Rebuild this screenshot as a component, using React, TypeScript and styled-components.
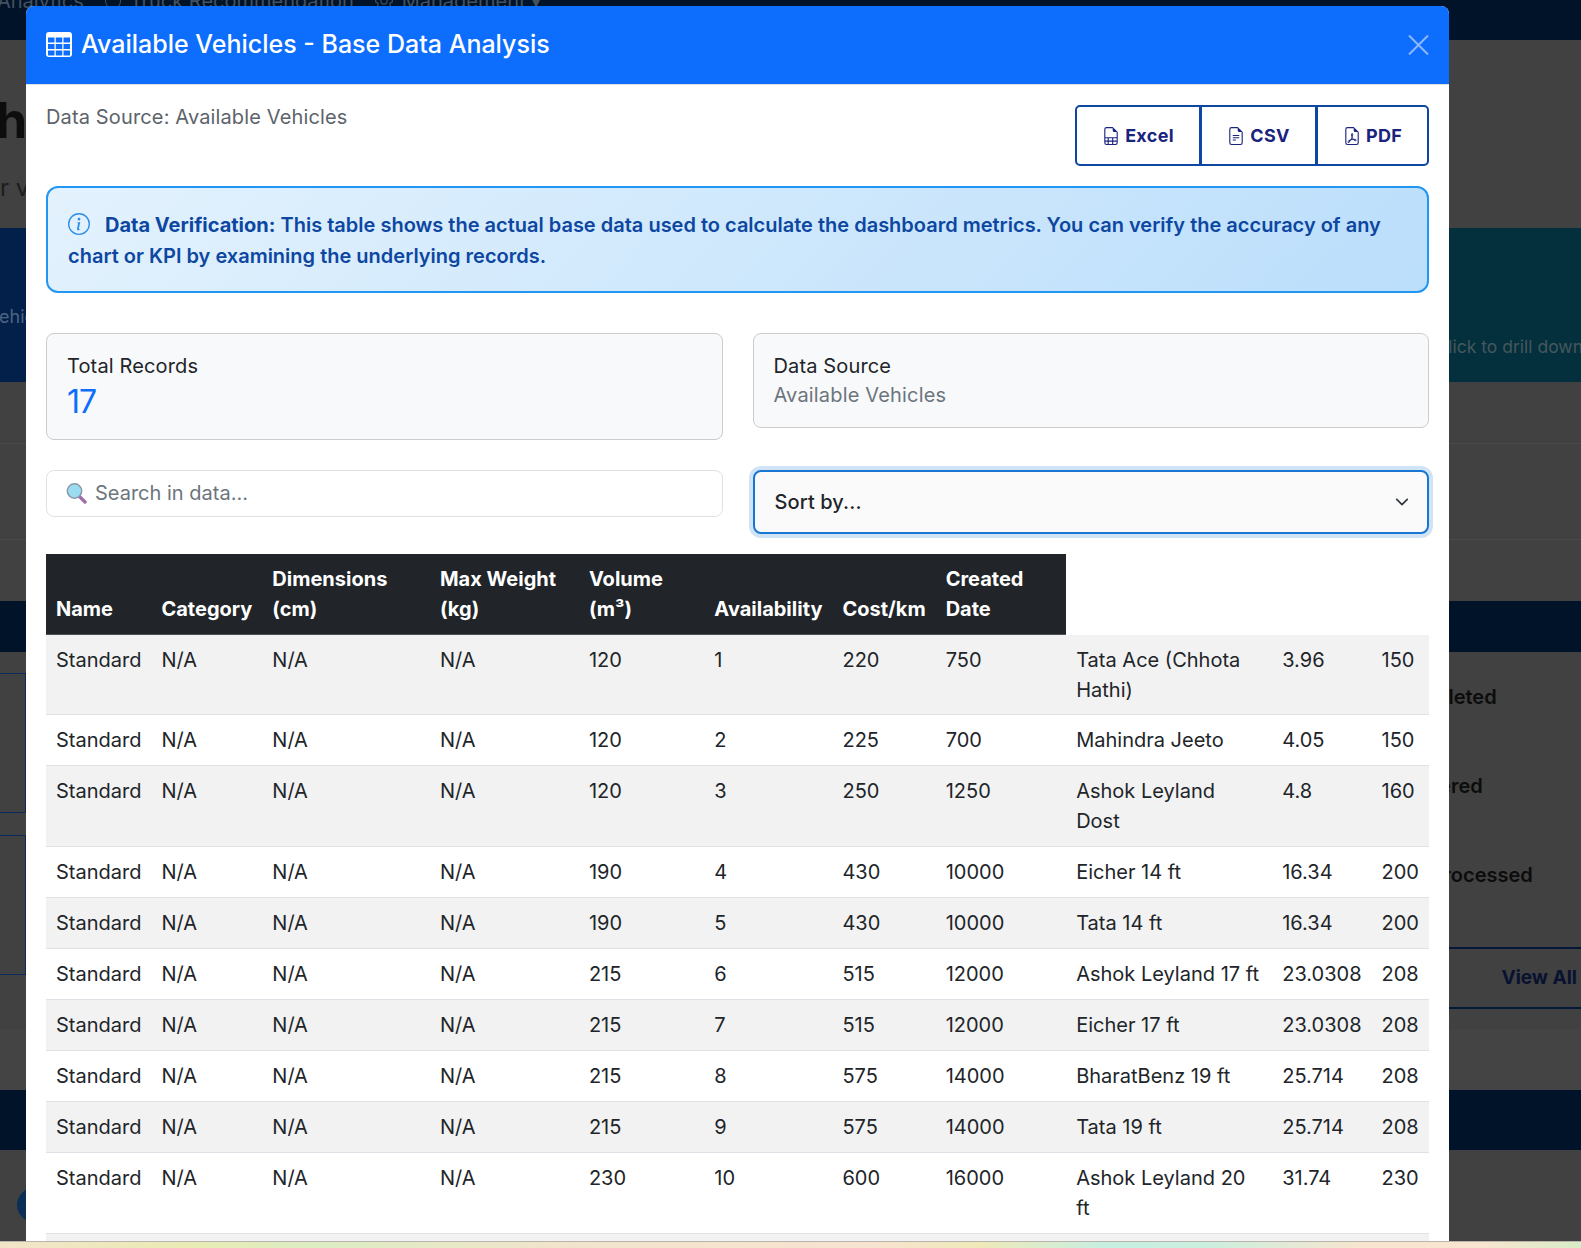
import React from 'react';
import styled, { createGlobalStyle } from 'styled-components';
import {
  BsFileEarmarkSpreadsheet,
  BsFileEarmarkText,
  BsFileEarmarkPdf,
  BsInfoCircle,
  BsGear,
  BsCircle,
} from 'react-icons/bs';

const GlobalStyle = createGlobalStyle`
  html, body {
    margin: 0;
    padding: 0;
    background: #414141;
    font-family: Inter, "Liberation Sans", sans-serif;
  }
  * { box-sizing: border-box; }
`;

/* page behind the dimmed backdrop */
const Page = styled.div`
  position: relative;
  width: 1581px;
  height: 1248px;
  overflow: hidden;
  display: flex;
  flex-direction: column;
  background: #414141;
`;

const TopNav = styled.div`
  height: 40px;
  flex: none;
  background: #001329;
  display: flex;
  align-items: flex-start;
  gap: 21px;
  padding-left: 0;
  color: #44515f;
  font-size: 20px;
  line-height: 24px;
  overflow: hidden;
`;

const NavItem = styled.span<{ $first?: boolean }>`
  margin-top: -11px;
  margin-left: ${({ $first }) => ($first ? '-3px' : '0')};
  display: inline-flex;
  align-items: center;
  gap: 9px;
  white-space: nowrap;
`;

const Hero = styled.div`
  height: 188px;
  flex: none;
  padding-top: 50px;
  white-space: nowrap;
  overflow: hidden;
`;

const HeroTitle = styled.div`
  font-size: 50px;
  line-height: 60px;
  font-weight: 700;
  color: #0d0d0d;
  margin-left: -4px;
`;

const HeroSub = styled.div`
  font-size: 24px;
  line-height: 30px;
  color: #1d1d1d;
  margin-top: 23px;
`;

const KpiBand = styled.div`
  height: 154px;
  flex: none;
  display: grid;
  grid-template-columns: 1fr 1fr;
`;

const KpiCard = styled.div<{ $bg: string; $right?: boolean }>`
  background: ${({ $bg }) => $bg};
  font-size: ${({ $right }) => ($right ? '17.5px' : '18px')};
  color: ${({ $right }) => ($right ? '#45575c' : '#4d6483')};
  white-space: nowrap;
  overflow: hidden;
  padding-top: ${({ $right }) => ($right ? '108px' : '78px')};
  padding-left: ${({ $right }) => ($right ? '645px' : '0')};
  text-indent: ${({ $right }) => ($right ? '0' : '-1px')};
  line-height: 22px;
`;

const TableBand = styled.div`
  height: 219px;
  flex: none;
  display: flex;
  flex-direction: column;
`;

const ThinRow = styled.div<{ $h: number }>`
  height: ${({ $h }) => $h}px;
  flex: none;
  border-bottom: 1px solid #4b4b4b;
`;

const NavyBand = styled.div<{ $h: number }>`
  height: ${({ $h }) => $h}px;
  flex: none;
  background: #001329;
`;

const PanelArea = styled.div`
  height: 438px;
  flex: none;
  display: grid;
  grid-template-columns: 26px 1fr 200px;
  align-items: start;
  padding-top: 21px;
  background: linear-gradient(#414141 0 86%, #444444 86%);
`;

const GhostCards = styled.div`
  display: flex;
  flex-direction: column;
  gap: 22px;
`;

const GhostCard = styled.div`
  height: 140px;
  border: 1px solid #0a2a5c;
  border-left: none;
`;

const StatusList = styled.div`
  grid-column: 3;
  margin-left: 10px;
  display: flex;
  flex-direction: column;
  font-size: 20px;
  line-height: 24px;
  font-weight: 600;
  color: #0c0c0c;
  white-space: nowrap;
  padding-top: 12px;
`;

const StatusRow = styled.div`
  height: 89px;
`;

const ViewAll = styled.div`
  margin-left: -60px;
  margin-right: -2px;
  margin-top: -5px;
  height: 62px;
  border-top: 2px solid #04183a;
  border-bottom: 2px solid #04183a;
  color: #081230;
  font-size: 19px;
  font-weight: 700;
  display: flex;
  align-items: center;
  justify-content: flex-end;
  padding-right: 6px;
`;

const BottomArea = styled.div`
  flex: 1;
  padding-top: 38px;
`;

const Blob = styled.div`
  width: 34px;
  height: 34px;
  border-radius: 50%;
  margin-left: 17px;
  background: #0a2e55;
`;

const DesktopStrip = styled.div`
  position: absolute;
  left: 0;
  right: 0;
  bottom: 0;
  height: 7px;
  border-top: 1px solid #b9b5ae;
  background: linear-gradient(
    90deg,
    #f3e4c9 0%,
    #e9ecb4 12%,
    #dcedc2 20%,
    #f2e4cc 36%,
    #f7e3d0 55%,
    #efe9b8 62%,
    #c6efe2 70%,
    #c9efdf 76%,
    #f7e5cf 86%,
    #f7e5cf 94%,
    #d8edc6 100%
  );
  z-index: 3;
`;

/* modal */
const Modal = styled.div`
  position: absolute;
  top: 6px;
  left: 26px;
  width: 1423px;
  height: 1236px;
  background: #fff;
  border-radius: 8px 8px 0 0;
  overflow: hidden;
  z-index: 2;
`;

const ModalHeader = styled.div`
  height: 79px;
  background: #0d6efd;
  border-bottom: 1px solid #dee2e6;
  padding: 0 20px;
  display: flex;
  align-items: center;
  justify-content: space-between;
`;

const ModalTitle = styled.h5`
  margin: 0 0 2px;
  display: flex;
  align-items: center;
  gap: 9px;
  font-size: 25px;
  line-height: 30px;
  font-weight: 500;
  color: #fff;
`;

const CloseIcon = styled.svg`
  width: 21px;
  height: 20px;
  stroke: #8fb8fe;
  stroke-width: 2;
  fill: none;
`;

const ModalBody = styled.div`
  padding: 20px 20px 0;
`;

const TopRow = styled.div`
  display: flex;
  justify-content: space-between;
  align-items: flex-start;
  margin-bottom: 20px;
`;

const SourceText = styled.div`
  font-size: 20px;
  line-height: 24px;
  letter-spacing: 0.14px;
  color: #5c636a;
`;

const ExportGroup = styled.div`
  display: flex;
`;

const ExportButton = styled.button<{ $w: number; $pos: 'first' | 'mid' | 'last' }>`
  width: ${({ $w }) => $w}px;
  height: 61px;
  background: #fff;
  border: 2px solid #0d47a1;
  margin-left: ${({ $pos }) => ($pos === 'first' ? '0' : '-1px')};
  border-radius: ${({ $pos }) =>
    $pos === 'first' ? '5px 0 0 5px' : $pos === 'last' ? '0 5px 5px 0' : '0'};
  color: #1a237e;
  font-family: inherit;
  font-size: 18px;
  font-weight: 700;
  letter-spacing: 0.3px;
  display: inline-flex;
  align-items: center;
  justify-content: center;
  gap: 5px;
  padding: 0;
  svg {
    width: 18px;
    height: 18px;
  }
`;

const VerifyAlert = styled.div`
  height: 107px;
  border: 2px solid #2196f3;
  border-radius: 12px;
  background: linear-gradient(135deg, #e3f2fd 0%, #bbdefb 100%);
  padding: 22px 20px 0;
  color: #0d47a1;
  font-size: 20px;
  line-height: 31px;
  font-weight: 600;
  margin-bottom: 40px;
  svg {
    width: 22px;
    height: 22px;
    margin-right: 15px;
    vertical-align: -3px;
    color: #2f8fe8;
  }
  strong {
    font-weight: 700;
  }
`;

const TwoCols = styled.div<{ $mb: number }>`
  display: grid;
  grid-template-columns: 1fr 1fr;
  gap: 30px;
  align-items: start;
  margin-bottom: ${({ $mb }) => $mb}px;
`;

const StatCard = styled.div`
  background: #f8f9fa;
  border: 1px solid #ccc;
  border-radius: 8px;
  padding: 20px;
`;

const StatLabel = styled.div<{ $mb: number }>`
  font-size: 20px;
  line-height: 24px;
  letter-spacing: 0.14px;
  color: #212529;
  margin-bottom: ${({ $mb }) => $mb}px;
`;

const StatNumber = styled.div`
  font-size: 32px;
  line-height: 34px;
  font-weight: 400;
  letter-spacing: -1px;
  color: #0d6efd;
`;

const StatValue = styled.div`
  font-size: 20px;
  line-height: 23px;
  letter-spacing: 0.17px;
  color: #6c757d;
`;

const SearchBox = styled.div`
  height: 47px;
  border: 1px solid #dee2e6;
  border-radius: 8px;
  background: #fff;
  display: flex;
  align-items: center;
  gap: 8px;
  padding: 0 0 2px 19px;
  font-size: 20px;
  color: #6c757d;
`;

const SelectBox = styled.div`
  height: 64px;
  border: 2px solid #1976d2;
  border-radius: 8px;
  background: #fafafa;
  box-shadow: 0 0 0 4px rgba(25, 118, 210, 0.2);
  display: flex;
  align-items: center;
  justify-content: space-between;
  padding: 0 18px 0 20px;
  font-size: 20px;
  font-weight: 500;
  letter-spacing: 0.1px;
  color: #212529;
`;

const DataTable = styled.table`
  width: 100%;
  border-collapse: collapse;
  font-size: 20px;
  line-height: 30px;
  color: #212529;
`;

const HeadCell = styled.th`
  background: #212529;
  color: #fff;
  font-weight: 700;
  text-align: left;
  vertical-align: bottom;
  padding: 10px;
  border-bottom: 1px solid #4d5154;
`;

const BodyRow = styled.tr`
  border-bottom: 1px solid #dee2e6;
  &:nth-child(odd) td {
    background: #f2f2f2;
  }
  &:first-child td {
    padding-bottom: 9px;
  }
`;

const BodyCell = styled.td`
  padding: 10px;
  vertical-align: top;
`;

const heads = ['Name', 'Category', 'Dimensions (cm)', 'Max Weight (kg)', 'Volume (m³)', 'Availability', 'Cost/km', 'Created Date'];

const rows = [
  ['120', '1', '220', '750', 'Tata Ace (Chhota Hathi)', '3.96', '150'],
  ['120', '2', '225', '700', 'Mahindra Jeeto', '4.05', '150'],
  ['120', '3', '250', '1250', 'Ashok Leyland Dost', '4.8', '160'],
  ['190', '4', '430', '10000', 'Eicher 14 ft', '16.34', '200'],
  ['190', '5', '430', '10000', 'Tata 14 ft', '16.34', '200'],
  ['215', '6', '515', '12000', 'Ashok Leyland 17 ft', '23.0308', '208'],
  ['215', '7', '515', '12000', 'Eicher 17 ft', '23.0308', '208'],
  ['215', '8', '575', '14000', 'BharatBenz 19 ft', '25.714', '208'],
  ['215', '9', '575', '14000', 'Tata 19 ft', '25.714', '208'],
  ['230', '10', '600', '16000', 'Ashok Leyland 20 ft', '31.74', '230'],
  ['230', '11', '600', '16000', 'Tata 20 ft', '31.74', '230'],
];

const TableGlyph = () => (
  <svg width="26" height="25" viewBox="0 0 26 25">
    <rect width="26" height="25" rx="3" fill="#fff" />
    {[5.5, 12, 18.5].map((y) =>
      [2, 9.75, 17.5].map((x) => (
        <rect key={`${x}-${y}`} x={x} y={y} width="6.5" height="5" fill="#0d6efd" />
      ))
    )}
  </svg>
);

const SearchGlyph = () => (
  <svg width="21" height="22" viewBox="0 0 21 22">
    <path d="M13 14l6 6" stroke="#a06ea8" strokeWidth="3.4" strokeLinecap="round" />
    <circle cx="8.5" cy="9" r="7.2" fill="#9cdcf2" stroke="#8b98a8" strokeWidth="1.5" />
  </svg>
);

const App = () => (
  <>
    <GlobalStyle />
    <Page>
      <TopNav>
        <NavItem $first>Analytics</NavItem>
        <NavItem><BsCircle size={16} />Truck Recommendation</NavItem>
        <NavItem><BsGear size={18} />Management ▾</NavItem>
      </TopNav>
      <Hero>
        <HeroTitle>hboard</HeroTitle>
        <HeroSub>r vehicles</HeroSub>
      </Hero>
      <KpiBand>
        <KpiCard $bg="#03204a">ehicles</KpiCard>
        <KpiCard $bg="#04303d" $right>Click to drill down</KpiCard>
      </KpiBand>
      <TableBand>
        <ThinRow $h={62} />
        <ThinRow $h={96} />
      </TableBand>
      <NavyBand $h={51} />
      <PanelArea>
        <GhostCards>
          <GhostCard />
          <GhostCard />
        </GhostCards>
        <StatusList>
          <StatusRow>Completed</StatusRow>
          <StatusRow>Delivered</StatusRow>
          <StatusRow>Not Processed</StatusRow>
          <ViewAll>View All</ViewAll>
        </StatusList>
      </PanelArea>
      <NavyBand $h={60} />
      <BottomArea>
        <Blob />
      </BottomArea>
      <DesktopStrip />

      <Modal>
        <ModalHeader>
          <ModalTitle>
            <TableGlyph />
            Available Vehicles - Base Data Analysis
          </ModalTitle>
          <CloseIcon viewBox="0 0 21 20">
            <path d="M1 0.5l19 19M20 0.5L1 19.5" />
          </CloseIcon>
        </ModalHeader>
        <ModalBody>
          <TopRow>
            <SourceText>Data Source: Available Vehicles</SourceText>
            <ExportGroup>
              <ExportButton $w={126} $pos="first"><BsFileEarmarkSpreadsheet />Excel</ExportButton>
              <ExportButton $w={117} $pos="mid"><BsFileEarmarkText />CSV</ExportButton>
              <ExportButton $w={113} $pos="last"><BsFileEarmarkPdf />PDF</ExportButton>
            </ExportGroup>
          </TopRow>
          <VerifyAlert>
            <BsInfoCircle />
            <strong>Data Verification:</strong> This table shows the actual base data used to calculate the dashboard metrics. You can verify the accuracy of any chart or KPI by examining the underlying records.
          </VerifyAlert>
          <TwoCols $mb={30}>
            <StatCard>
              <StatLabel $mb={7}>Total Records</StatLabel>
              <StatNumber>17</StatNumber>
            </StatCard>
            <StatCard>
              <StatLabel $mb={6}>Data Source</StatLabel>
              <StatValue>Available Vehicles</StatValue>
            </StatCard>
          </TwoCols>
          <TwoCols $mb={20}>
            <SearchBox>
              <SearchGlyph />
              Search in data...
            </SearchBox>
            <SelectBox>
              Sort by...
              <svg width="14" height="14" viewBox="0 0 16 16" fill="none" stroke="#343a40" strokeWidth="2" strokeLinecap="round" strokeLinejoin="round">
                <path d="M2 5l6 6 6-6" />
              </svg>
            </SelectBox>
          </TwoCols>
          <DataTable>
            <thead>
              <tr>
                {heads.map((h) => (
                  <HeadCell key={h}>{h}</HeadCell>
                ))}
              </tr>
            </thead>
            <tbody>
              {rows.map((r) => (
                <BodyRow key={r[1]}>
                  <BodyCell>Standard</BodyCell>
                  <BodyCell>N/A</BodyCell>
                  <BodyCell>N/A</BodyCell>
                  <BodyCell>N/A</BodyCell>
                  {r.map((v, i) => (
                    <BodyCell key={i}>{v}</BodyCell>
                  ))}
                </BodyRow>
              ))}
            </tbody>
          </DataTable>
        </ModalBody>
      </Modal>
    </Page>
  </>
);

export default App;
